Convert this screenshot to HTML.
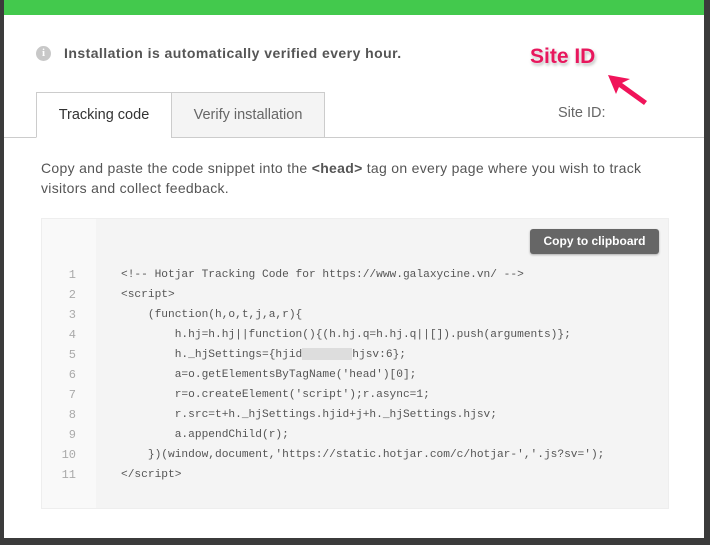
<!DOCTYPE html>
<html><head><meta charset="utf-8"><style>
*{margin:0;padding:0;box-sizing:border-box}
body{width:710px;height:545px;background:#3b3b3b;position:relative;overflow:hidden;font-family:"Liberation Sans",sans-serif}
.modal{position:absolute;left:4px;top:0;width:700px;height:538px;background:#fff}
.green{position:absolute;left:0;top:0;width:700px;height:15px;background:#43c94d}
.info{position:absolute;left:32px;top:46px;width:15px;height:15px;border-radius:50%;background:#c8c8c8;color:#fff;font:bold 11px "Liberation Serif",serif;text-align:center;line-height:15px}
.msg{position:absolute;left:60px;top:45px;font-size:14px;letter-spacing:0.45px;font-weight:bold;color:#555}
.siteid{position:absolute;left:526px;top:45px;font-size:21px;font-weight:bold;color:#e8175d;text-shadow:0 0 3px #fff,1px 2px 3px rgba(0,0,0,.35)}
.line{position:absolute;left:0;top:137px;width:700px;height:1px;background:#ccc}
.tab{position:absolute;top:92px;height:46px;border:1px solid #ccc;font-size:14.5px;line-height:44px;text-align:center}
.t1{left:32px;width:136px;background:#fff;color:#333;border-bottom:1px solid #fff}
.t2{left:167px;width:154px;background:#f4f4f4;color:#666}
.sid{position:absolute;left:554px;top:105px;font-size:14.5px;color:#666}
.desc{position:absolute;left:37px;top:158px;width:630px;font-size:14px;letter-spacing:0.3px;line-height:20px;color:#555}
.code{position:absolute;left:37px;top:218px;width:628px;height:291px;background:#f4f4f4;border:1px solid #eee}
.gut{position:absolute;left:0;top:0;width:54px;height:289px;background:#f9f9f9}
.btn{position:absolute;left:488px;top:10px;width:129px;height:25px;background:#666;color:#fff;border-radius:3px;font-size:12px;font-weight:bold;text-align:center;line-height:25px;box-shadow:0 1px 2px rgba(0,0,0,.3)}
.nums{position:absolute;left:0;top:46px;width:34px;text-align:right;font:12px/20px "Liberation Mono",monospace;color:#aaa}
pre{position:absolute;left:79px;top:46px;font:11.2px/20px "Liberation Mono",monospace;color:#555}
.blur{display:inline-block;width:50px;height:12px;background:#ddd;vertical-align:middle}
</style></head><body>
<div class="modal">
<div class="green"></div>
<div class="info">i</div>
<div class="msg">Installation is automatically verified every hour.</div>
<div class="siteid">Site ID</div>
<svg style="position:absolute;left:600px;top:70px" width="50" height="40"><path d="M4 5 L12 24 L15 17 L40 35 L43 31 L18 13 L26 9 Z" fill="#f0145a"/></svg>
<div class="line"></div>
<div class="tab t1">Tracking code</div>
<div class="tab t2">Verify installation</div>
<div class="sid">Site ID:</div>
<div class="desc">Copy and paste the code snippet into the <b>&lt;head&gt;</b> tag on every page where you wish to track visitors and collect feedback.</div>
<div class="code"><div class="gut"></div>
<div class="btn">Copy to clipboard</div>
<div class="nums">1<br>2<br>3<br>4<br>5<br>6<br>7<br>8<br>9<br>10<br>11</div>
<pre>&lt;!-- Hotjar Tracking Code for https://www.galaxycine.vn/ --&gt;
&lt;script&gt;
    (function(h,o,t,j,a,r){
        h.hj=h.hj||function(){(h.hj.q=h.hj.q||[]).push(arguments)};
        h._hjSettings={hjid<span class="blur"></span>hjsv:6};
        a=o.getElementsByTagName('head')[0];
        r=o.createElement('script');r.async=1;
        r.src=t+h._hjSettings.hjid+j+h._hjSettings.hjsv;
        a.appendChild(r);
    })(window,document,'https://static.hotjar.com/c/hotjar-','.js?sv=');
&lt;/script&gt;</pre>
</div>
</div>
</body></html>
